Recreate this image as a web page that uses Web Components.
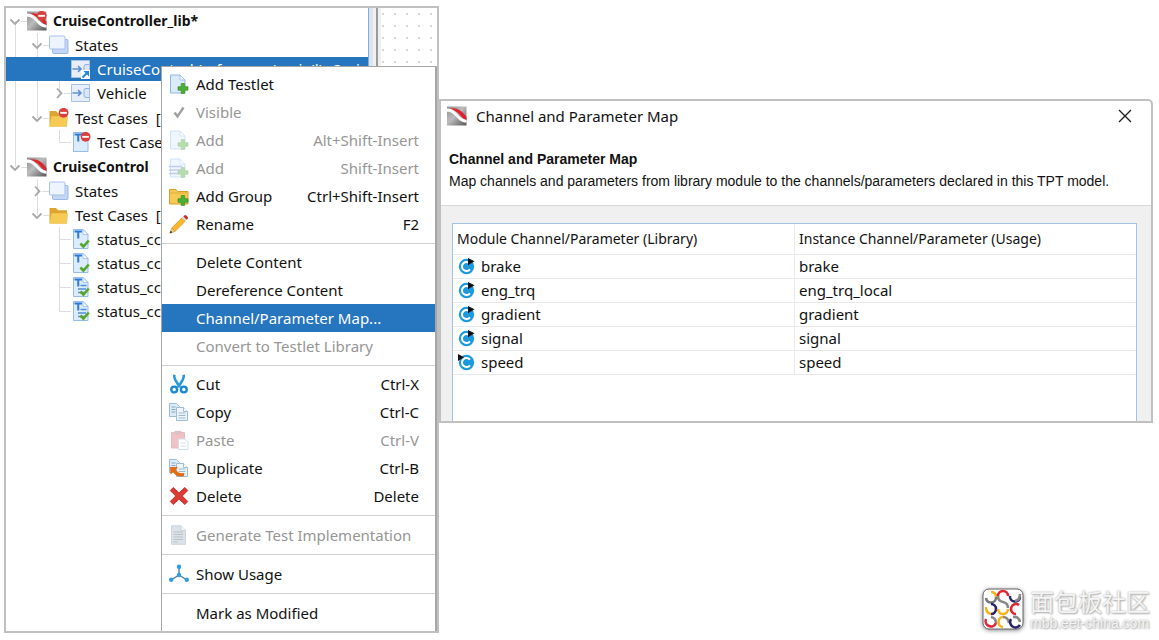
<!DOCTYPE html>
<html lang="en">
<head>
<meta charset="utf-8">
<title>Channel and Parameter Map</title>
<style>
  body { margin: 0; background: #fff; color: #111; font: 15px/24px "Noto Sans", "Open Sans", sans-serif; }
</style>
</head>
<body>
<tpt-workspace>
  <tpt-project-window slot="project">
    <tpt-tree slot="tree">
      <tree-item icon="project-locked" label="CruiseController_lib*" state="open" strong>
        <tree-item icon="states" label="States" state="open">
          <tree-item icon="state-ref" label="CruiseControl (reference 'main'l): Cruis" selected></tree-item>
          <tree-item icon="state" label="Vehicle" state="closed"></tree-item>
        </tree-item>
        <tree-item icon="folder-locked" label="Test Cases  [1]" state="open">
          <tree-item icon="test-locked" label="Test Case"></tree-item>
        </tree-item>
      </tree-item>
      <tree-item icon="project" label="CruiseControl" state="open" strong>
        <tree-item icon="states" label="States" state="closed"></tree-item>
        <tree-item icon="folder" label="Test Cases  [4]" state="open">
          <tree-item icon="test-ok" label="status_cc"></tree-item>
          <tree-item icon="test-ok" label="status_cc"></tree-item>
          <tree-item icon="test-list-ok" label="status_cc"></tree-item>
          <tree-item icon="test-list-ok" label="status_cc"></tree-item>
        </tree-item>
      </tree-item>
    </tpt-tree>
    <context-menu slot="menu">
      <menu-group>
        <menu-item icon="add-testlet">Add Testlet</menu-item>
        <menu-item icon="check" disabled>Visible</menu-item>
        <menu-item icon="add-testlet" keys="Alt+Shift-Insert" disabled>Add</menu-item>
        <menu-item icon="add-list" keys="Shift-Insert" disabled>Add</menu-item>
        <menu-item icon="add-group" keys="Ctrl+Shift-Insert">Add Group</menu-item>
        <menu-item icon="rename" keys="F2">Rename</menu-item>
      </menu-group>
      <menu-group>
        <menu-item>Delete Content</menu-item>
        <menu-item>Dereference Content</menu-item>
        <menu-item active>Channel/Parameter Map...</menu-item>
        <menu-item disabled>Convert to Testlet Library</menu-item>
      </menu-group>
      <menu-group>
        <menu-item icon="cut" keys="Ctrl-X">Cut</menu-item>
        <menu-item icon="copy" keys="Ctrl-C">Copy</menu-item>
        <menu-item icon="paste" keys="Ctrl-V" disabled>Paste</menu-item>
        <menu-item icon="duplicate" keys="Ctrl-B">Duplicate</menu-item>
        <menu-item icon="delete" keys="Delete">Delete</menu-item>
      </menu-group>
      <menu-group single><menu-item icon="generate" disabled>Generate Test Implementation</menu-item></menu-group>
      <menu-group single><menu-item icon="usage">Show Usage</menu-item></menu-group>
      <menu-group single><menu-item>Mark as Modified</menu-item></menu-group>
    </context-menu>
  </tpt-project-window>
  <map-dialog slot="dialog">
    <span slot="title">Channel and Parameter Map</span>
    <span slot="heading">Channel and Parameter Map</span>
    <span slot="description">Map channels and parameters from library module to the channels/parameters declared in this TPT model.</span>
    <map-table></map-table>
  </map-dialog>
  <site-mark slot="mark"></site-mark>
</tpt-workspace>

<script>
const LOCK = '<circle cx="14.6" cy="4.8" r="4.9" fill="#d9403c"/><path d="M11.3 3.9h6.6v1.9h-6.6z" fill="#fff"/>';
const PLUS = '<path d="M12.2 9.5h3.4v3.2H19v3.5h-3.4v3.2h-3.4v-3.2H9v-3.5h3.2z" fill="#4cae35" stroke="#3a8f2a" stroke-width=".7"/>';
const TICK = '<path d="M9.4 14.5l3 3 5.4-6" fill="none" stroke="#54a62b" stroke-width="2.6"/>';
const PROJECT = '<defs><linearGradient id="g" x1="0" y1="0" x2="1" y2="1"><stop stop-color="#8d8d8d"/><stop offset=".45" stop-color="#bcbcbc"/><stop offset="1" stop-color="#555"/></linearGradient></defs><path d="M0 .5h19.5v19H0z" fill="url(#g)"/><path d="M2 2.8C10 .6 15 5 19.5 11v3.5C14 12 11 4 2 2.8z" fill="#e0222c"/><path d="M0 2.6c9-.8 10.500 9.800 19.500 11.400v2.600C9.500 16.500 9 5.500 0 5.800z" fill="#fff"/>';
const PAGE = '<path d="M1.500 1h9.500l5 5v13H1.500z" fill="#dcebfc" stroke="#8fb9ea"/><path d="M11 1l5 5h-5z" fill="#fff" stroke="#8fb9ea" stroke-width=".8"/>';
const FOLDER = '<path d="M.5 3h6.500l2 2.300h9V18.500H.5z" fill="#dda432"/><path d="M2.500 8.200H19l-1 10.300H.5z" fill="#f6cb55"/>';
const ADDFOLDER = '<path d="M.5 3.500h6.500l1.500 2h10.500v12.500H.5z" fill="#f6ca54" stroke="#d99e30"/><path d="M1 7h17.500" stroke="#e4ae3b"/>';
const STATE = '<path d="M.5 1.500h18v17H.5z" fill="#e6eefb" stroke="#a9c0e6"/><path d="M1.500 10h8M7 7.200L10 10l-3 2.800" fill="none" stroke="#6190d4" stroke-width="1.600"/><path d="M18 5.500h-3q-2 0-2 2v5q0 2 2 2h3" fill="#d9e6fa" stroke="#8fb0e2"/>';
const TEST = '<path d="M2.500.5h9.500l5 5v14H2.500z" fill="#dcebfd" stroke="#93bbec"/><path d="M12 .5l5 5h-5z" fill="#fff" stroke="#93bbec" stroke-width=".8"/><path d="M3.500 2.600h7.500M7.250 2.600v7" stroke="#2a7ad8" stroke-width="2"/>';
const COPY = '<path d="M.5 1.500h7l3 3v10H.5z" fill="#dcebf5" stroke="#9dbdd2"/><path d="M2.500 5h4M2.500 7.500h4M2.500 10h4" stroke="#84a9c2"/><path d="M7.500 5.500h7l4 4v9h-11z" fill="#edf5fa" stroke="#9dbdd2"/><path d="M14.500 5.500v4h4" fill="#fff" stroke="#9dbdd2"/><path d="M9.500 11h7M9.500 13.500h7M9.500 16h7" stroke="#9cb9cc"/>';
const channel = flag => '<circle cx="9.500" cy="10.500" r="7.700" fill="#1b9ae0"/><path d="M13 7.700a4.500 4.500 0 1 0 0 5.600" fill="none" stroke="#fff" stroke-width="2"/><path d="' + flag + '" fill="#111"/>';
const ICONS = {
  'project': PROJECT,
  'project-locked': PROJECT + LOCK,
  'states': '<rect x="3.500" y="4.500" width="15.500" height="14" rx="1" fill="#c3d6f4" stroke="#9cb9e6"/><rect x=".5" y="1" width="15.500" height="13" rx="1" fill="#eef4fe" stroke="#a6c1ec"/>',
  'state': STATE,
  'state-ref': STATE + '<path d="M10 11h9v9h-9z" fill="#fff"/><path d="M11.500 18.500l4-4" stroke="#1e86dc" stroke-width="2"/><path d="M12.500 12h5.500v5.500z" fill="#1e86dc"/>',
  'folder': FOLDER,
  'folder-locked': FOLDER + LOCK,
  'test-locked': TEST + LOCK,
  'test-ok': TEST + TICK,
  'test-list-ok': TEST + '<path d="M9.500 8.500h6M7 12h8M7 15.500h6" stroke="#4f8fdf" stroke-width="1.500"/>' + TICK,
  'add-testlet': PAGE + PLUS,
  'add-list': PAGE + '<path d="M0 8.500h13M0 12h12M0 15.500h9" stroke="#5f82dd" stroke-width="1.700"/>' + PLUS,
  'add-group': ADDFOLDER + PLUS,
  'check': '<path d="M5.500 10.500l3 4 6-9" fill="none" stroke="#111" stroke-width="2.400"/>',
  'rename': '<path d="M.8 19.200l2-5.200 3.300 3.300z" fill="#f2d6a8" stroke="#b8801f" stroke-width=".6"/><path d="M.8 19.200l1-2.500 1.500 1.500z" fill="#222"/><path d="M2.800 14L13 3.800l3.300 3.300L6.100 17.300z" fill="#fbb829" stroke="#d08818" stroke-width=".7"/><path d="M12.900 3.800l1.300-1.300 3.300 3.300-1.300 1.300z" fill="#ddd"/><path d="M14.300 2.500l1-1q1-.8 2 0l1.400 1.400q.7 1 0 1.900l-1.100 1z" fill="#c92a2a"/>',
  'cut': '<path d="M5.300.8q-.5 2.500 1 5l4.500 7.400M14.700.8q.5 2.500-1 5l-4.500 7.400" fill="none" stroke="#2599df" stroke-width="2.600"/><circle cx="5.200" cy="15.500" r="2.900" fill="none" stroke="#1689d4" stroke-width="2.400"/><circle cx="14.800" cy="15.500" r="2.900" fill="none" stroke="#1689d4" stroke-width="2.400"/>',
  'copy': COPY,
  'paste': '<path d="M2.500 2.500h13v15.500h-13z" fill="#d96a70" stroke="#c2565e"/><path d="M5.500.8h7v4h-7z" fill="#a86a70"/><path d="M9.500 9h6.500l3 3v7.500H9.500z" fill="#fff" stroke="#8fb0cf"/><path d="M11.500 13h5M11.500 16h5" stroke="#8fb0cf"/>',
  'duplicate': COPY + '<path d="M1 9h8L6.800 11.500q2 4.500 8.200 3.500v3Q7.500 20 4.200 14L1.500 16.500z" fill="#e66c14"/>',
  'delete': '<path d="M4.200 1.500L10 6.800l5.800-5.300 3 3L13.300 10l5.500 5.500-3 3L10 13.200l-5.800 5.300-3-3L6.700 10 1.200 4.500z" fill="#dc3a34" stroke="#b5241f" stroke-width=".8"/>',
  'generate': '<path d="M2.500.8h9.500l4.500 4.500v14h-14z" fill="#a9b8c6" stroke="#8496a6"/><path d="M12 .8v4.500h4.500" fill="#eee" stroke="#8496a6"/><path d="M4.500 7h9.500M4.500 9.500h9.500M4.500 12h9.500M4.500 14.500h9.500M4.500 17h4" stroke="#52677a"/>',
  'usage': '<path d="M10 3.500V11L2 16M10 11l8 5" fill="none" stroke="#577b96" stroke-width="1.400"/><g fill="#2b9fe6"><circle cx="10" cy="2.800" r="2.200"/><circle cx="10" cy="11" r="2.200"/><circle cx="2.200" cy="15.800" r="2.200"/><circle cx="17.800" cy="15.800" r="2.200"/></g>',
  'channel-out': channel('M11 2l6.500 3.300-6.500 4z'),
  'channel-in': channel('M1 2l6 3.300L1 9z'),
  'close': '<path d="M4 4l12 12M16 4L4 16" fill="none" stroke="#222" stroke-width="1.400"/>',
  'chevron-open': '<path d="M1.500 8.500L6 13l4.500-4.500" fill="none" stroke="#a8a8a8" stroke-width="1.800"/><path d="M12 10.500h6" stroke="#ddd"/>',
  'chevron-closed': '<path d="M4 5.500l4.500 4.700L4 15" fill="none" stroke="#a8a8a8" stroke-width="1.800"/><path d="M11 10.500h7" stroke="#ddd"/>',
  'leaf': '<path d="M6 10.500h12" stroke="#ddd"/>'
};

class AppIcon extends HTMLElement {
  connectedCallback() {
    if (this.shadowRoot) return;
    this.attachShadow({ mode: 'open' }).innerHTML =
      `<style>:host{display:block;flex:none;width:20px;height:20px;white-space:normal}svg{display:block}</style>
       <svg width="20" height="20" viewBox="0 0 20 20" aria-hidden="true">${ICONS[this.getAttribute('name')] || ''}</svg>`;
  }
}
customElements.define('app-icon', AppIcon);

class TreeItem extends HTMLElement {
  connectedCallback() {
    if (this.shadowRoot) return;
    let depth = 0;
    for (let p = this.parentElement; p && p.localName === 'tree-item'; p = p.parentElement) depth++;
    this.setAttribute('role', 'treeitem');
    const state = this.getAttribute('state');
    const selected = this.hasAttribute('selected');
    if (selected) this.setAttribute('aria-selected', 'true');
    this.attachShadow({ mode: 'open' }).innerHTML = `
      <style>
        :host { --depth: ${depth}; display: block;
          background: linear-gradient(#ddd, #ddd) calc(9px + var(--depth) * 22px) 0 / 1px 100% no-repeat; }
        :host(:last-child) { background-size: 1px 12px; }
        :host([strong]:first-child) { background-position-y: 12px; }
        .row { display: flex; align-items: center; height: 24px; white-space: pre; overflow: hidden;
          padding-left: calc(3px + var(--depth) * 22px); }
        .toggle { width: 18px; overflow: hidden; }
        .label { margin-left: 6px; }
        :host([strong]) .label { font-size: 14px; font-weight: 700; }
        :host([selected]) .row { background: #2675bf; color: #fff; }
        :host([selected]) .toggle { visibility: hidden; }
        .children { display: block; }
        .deep { padding-bottom: 1px; }
      </style>
      <div class="row"><app-icon class="toggle" name="${state ? 'chevron-' + state : 'leaf'}"></app-icon><app-icon name="${this.getAttribute('icon')}"></app-icon><span class="label">${this.getAttribute('label')}</span></div>
      <div class="children${depth === 1 && this.children.length ? ' deep' : ''}" role="group"><slot></slot></div>`;
  }
}
customElements.define('tree-item', TreeItem);

class TptTree extends HTMLElement {
  connectedCallback() {
    this.setAttribute('role', 'tree');
    this.attachShadow({ mode: 'open' }).innerHTML =
      `<style>:host{display:block;padding-top:1px;min-width:0}</style><slot></slot>`;
  }
}
customElements.define('tpt-tree', TptTree);

class ProjectWindow extends HTMLElement {
  connectedCallback() {
    this.attachShadow({ mode: 'open' }).innerHTML = `
      <style>
        :host { display: grid; grid-template: 1fr / 1fr; border: 2px solid #c0c0c0; box-sizing: border-box; }
        .back { display: grid; grid-area: 1 / 1; grid-template-columns: minmax(0, 1fr) 13px 56px; }
        .splitter { box-sizing: border-box; border-left: 1px solid #84abd8; border-right: 3px solid #f0f0f0;
          background: linear-gradient(90deg, #dbe4f0 4px, #f0f0f0 4px 7px, #999 7px); }
        .canvas { background: radial-gradient(circle at 2px 6px, #777, transparent 1px) 0 0 / 12px 12px; }
        .over { display: block; grid-area: 1 / 1; margin: 58px 0 0 155px; }
      </style>
      <div class="back"><slot name="tree"></slot><div class="splitter"></div><div class="canvas"></div></div>
      <div class="over"><slot name="menu"></slot></div>`;
  }
}
customElements.define('tpt-project-window', ProjectWindow);

class ContextMenu extends HTMLElement {
  connectedCallback() {
    this.setAttribute('role', 'menu');
    this.attachShadow({ mode: 'open' }).innerHTML =
      `<style>:host{display:block;background:#fff;border:1px solid #a6a6a6;border-right-width:2px;border-bottom:0}</style><slot></slot>`;
  }
}
customElements.define('context-menu', ContextMenu);

class MenuGroup extends HTMLElement {
  connectedCallback() {
    this.setAttribute('role', 'group');
    this.attachShadow({ mode: 'open' }).innerHTML =
      `<style>
        :host { display: block; padding: 4px 0 5px; border-top: 1px solid #d0d0d0; }
        :host([single]) { padding: 5px 0; }
        :host(:first-child) { padding-top: 3px; border-top: 0; }
        :host(:last-child) { padding-bottom: 4px; }
      </style><slot></slot>`;
  }
}
customElements.define('menu-group', MenuGroup);

class MenuItem extends HTMLElement {
  connectedCallback() {
    const off = this.hasAttribute('disabled');
    this.attachShadow({ mode: 'open' }).innerHTML = `
      <style>
        :host { display: block; }
        button { display: flex; align-items: center; width: 100%; height: 28px; margin: 0; border: 0;
          padding: 0 16px 0 7px; background: none; color: #111; font: inherit; text-align: left; white-space: nowrap; }
        button:disabled { color: #969696; }
        button:disabled app-icon { opacity: .4; }
        :host([active]) button { background: #2675bf; color: #fff; }
        .text { flex: 1; margin-left: 7px; }
      </style>
      <button type="button" role="menuitem"${off ? ' disabled' : ''}><app-icon name="${this.getAttribute('icon') || ''}"></app-icon><span class="text"><slot></slot></span><span>${this.getAttribute('keys') || ''}</span></button>`;
  }
}
customElements.define('menu-item', MenuItem);

class MapTable extends HTMLElement {
  connectedCallback() {
    const rows = [['brake', 'brake', 'out'], ['eng_trq', 'eng_trq_local', 'out'], ['gradient', 'gradient', 'out'],
      ['signal', 'signal', 'out'], ['speed', 'speed', 'in']];
    this.attachShadow({ mode: 'open' }).innerHTML = `
      <style>
        :host { display: block; background: #fff; border: 1px solid #a3c1e2; border-bottom: 0; padding-bottom: 46px; }
        table { width: 100%; table-layout: fixed; border-collapse: collapse; }
        th, td { box-sizing: border-box; padding: 0 4px; border-bottom: 1px solid #e9e9e9; text-align: left; }
        th:first-child, td:first-child { border-right: 1px solid #e9e9e9; }
        th { height: 30px; font-size: 14px; font-weight: 400; }
        td { height: 24px; line-height: 23px; }
        .name { display: flex; align-items: center; gap: 4px; }
      </style>
      <table>
        <thead><tr><th scope="col">Module Channel/Parameter (Library)</th><th scope="col">Instance Channel/Parameter (Usage)</th></tr></thead>
        <tbody>${rows.map(r => `<tr><td><div class="name"><app-icon name="channel-${r[2]}"></app-icon><span>${r[0]}</span></div></td><td>${r[1]}</td></tr>`).join('')}</tbody>
      </table>`;
  }
}
customElements.define('map-table', MapTable);

class MapDialog extends HTMLElement {
  connectedCallback() {
    this.setAttribute('role', 'dialog');
    this.attachShadow({ mode: 'open' }).innerHTML = `
      <style>
        :host { display: block; border: 2px solid #c0c0c0; border-top-right-radius: 5px; background: #fff; }
        .bar { display: flex; align-items: center; height: 30px; padding: 0 16px 0 6px; }
        .title { flex: 1; margin-left: 9px; }
        button { border: 0; padding: 0; background: none; }
        .intro { padding: 17px 8px 13px; border-bottom: 1px solid #d8d8d8; font-family: "Liberation Sans", Arial, sans-serif; }
        h1, p { margin: 0; font-size: 14px; line-height: 22px; }
        .body { background: #f0f0f0; padding: 17px 14px 0 11px; }
      </style>
      <div class="bar"><app-icon name="project"></app-icon><span class="title"><slot name="title"></slot></span><button type="button" aria-label="Close"><app-icon name="close"></app-icon></button></div>
      <div class="intro"><h1><slot name="heading"></slot></h1><p><slot name="description"></slot></p></div>
      <div class="body"><slot></slot></div>`;
  }
}
customElements.define('map-dialog', MapDialog);

class SiteMark extends HTMLElement {
  connectedCallback() {
    this.attachShadow({ mode: 'open' }).innerHTML = `
      <style>
        :host { display: flex; align-items: center; gap: 6px; padding: 0 3px 2px 0; }
        svg { display: block; filter: drop-shadow(0 1px 2px #888); }
        .words { color: #f4f4f4; text-shadow: 0 0 2px #aaa, 1px 1px 2px #aaa; white-space: nowrap; }
        .name { font: 24px/28px "Noto Sans CJK SC", sans-serif; }
        .site { font: 14px/16px "Liberation Sans", Arial, sans-serif; }
      </style>
      <svg width="42" height="42" viewBox="0 0 42 42" aria-hidden="true"><rect x="1" y="1" width="40" height="40" rx="6" fill="#fff" stroke="#666"/>
        <g fill="none" stroke-width="2.600">
          <path d="M4 10a5 5 0 0 0 10-1" stroke="#777"/><path d="M9 4q5 0 5 5" stroke="#f5b51d"/>
          <path d="M16 8a5 5 0 0 1 10 0" stroke="#e32636"/><path d="M16 8q0 5 5 6t5 6" stroke="#888"/>
          <path d="M28 8a5 5 0 0 0 10 1" stroke="#28236e"/><path d="M33 13q5-1 5-7" stroke="#888"/>
          <path d="M9 16a5 5 0 0 1 0 10" stroke="#28236e"/><path d="M4 19q0 6 5 7" stroke="#f5b51d"/>
          <path d="M16 21a5 5 0 0 0 10 0" stroke="#f5b51d"/>
          <path d="M37 17a5 5 0 1 0-3 9" stroke="#e32636"/>
          <path d="M4 31a5 5 0 0 0 10 4" stroke="#e32636"/><path d="M14 35q0-5-5-6" stroke="#888"/>
          <path d="M22 29a5 5 0 0 0-1 10" stroke="#f5b51d"/><path d="M21 29q5 0 6 6" stroke="#888"/>
          <path d="M29 31a5 5 0 0 0 9 6" stroke="#28236e"/><path d="M31 29q6-1 7 5" stroke="#888"/>
        </g></svg>
      <div class="words"><div class="name">面包板社区</div><div class="site">mbb.eet-china.com</div></div>`;
  }
}
customElements.define('site-mark', SiteMark);

class Workspace extends HTMLElement {
  connectedCallback() {
    this.attachShadow({ mode: 'open' }).innerHTML = `
      <style>
        :host { display: flex; padding: 6px 6px 7px 4px; }
        .left { flex: 0 0 435px; }
        .right { flex: 1; min-width: 0; display: flex; flex-direction: column; justify-content: space-between; padding-top: 93px; }
        .mark { align-self: flex-end; }
      </style>
      <div class="left"><slot name="project"></slot></div>
      <div class="right"><slot name="dialog"></slot><div class="mark"><slot name="mark"></slot></div></div>`;
  }
}
customElements.define('tpt-workspace', Workspace);
</script>
</body>
</html>
